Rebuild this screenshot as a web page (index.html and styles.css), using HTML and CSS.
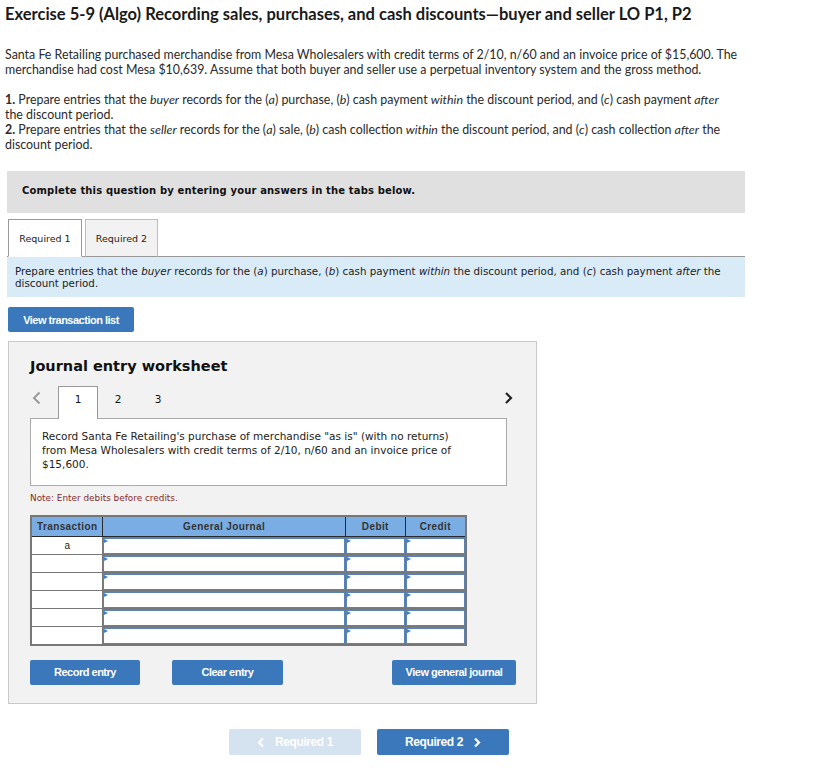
FILE: index.html
```html
<!DOCTYPE html>
<html>
<head>
<meta charset="utf-8">
<link rel="stylesheet" href="styles.css">
</head>
<body>
<div class="page">
  <h1 class="title">Exercise 5-9 (Algo) Recording sales, purchases, and cash discounts—buyer and seller LO P1, P2</h1>
  <p class="intro">Santa Fe Retailing purchased merchandise from Mesa Wholesalers with credit terms of 2/10, n/60 and an invoice price of $15,600. The merchandise had cost Mesa $10,639. Assume that both buyer and seller use a perpetual inventory system and the gross method.</p>
  <p class="reqs"><b>1.</b> Prepare entries that the <i>buyer</i> records for the (<i>a</i>) purchase, (<i>b</i>) cash payment <i>within</i> the discount period, and (<i>c</i>) cash payment <i>after</i> the discount period.<br><b>2.</b> Prepare entries that the <i>seller</i> records for the (<i>a</i>) sale, (<i>b</i>) cash collection <i>within</i> the discount period, and (<i>c</i>) cash collection <i>after</i> the discount period.</p>

  <div class="banner">Complete this question by entering your answers in the tabs below.</div>

  <div class="tabs">
    <div class="tab active">Required 1</div>
    <div class="tab">Required 2</div>
  </div>
  <div class="instr">Prepare entries that the <i>buyer</i> records for the (<i>a</i>) purchase, (<i>b</i>) cash payment <i>within</i> the discount period, and (<i>c</i>) cash payment <i>after</i> the discount period.</div>

  <button class="btn btn-list">View transaction list</button>

  <div class="panel">
    <h2 class="panel-title">Journal entry worksheet</h2>
    <div class="steps">
      <span class="arrow prev">
        <svg width="9" height="14" viewBox="0 0 9 14"><path d="M7.5 1.5 L2 7 L7.5 12.5" fill="none" stroke="#9a9a9a" stroke-width="2"/></svg>
      </span>
      <span class="step active">1</span>
      <span class="step">2</span>
      <span class="step">3</span>
      <span class="spacer"></span>
      <span class="arrow next">
        <svg width="9" height="14" viewBox="0 0 9 14"><path d="M2 2 L7 7 L2 12" fill="none" stroke="#222" stroke-width="2.2"/></svg>
      </span>
    </div>
    <div class="record">Record Santa Fe Retailing's purchase of merchandise "as is" (with no returns) from Mesa Wholesalers with credit terms of 2/10, n/60 and an invoice price of $15,600.</div>
    <div class="note">Note: Enter debits before credits.</div>

    <table class="journal">
      <thead>
        <tr><th class="c-tr">Transaction</th><th class="c-gj">General Journal</th><th class="c-dr">Debit</th><th class="c-cr">Credit</th></tr>
      </thead>
      <tbody>
        <tr><td class="tcell">a</td><td class="inp"><div class="box"></div></td><td class="inp"><div class="box"></div></td><td class="inp"><div class="box"></div></td></tr>
        <tr><td class="tcell"></td><td class="inp"><div class="box"></div></td><td class="inp"><div class="box"></div></td><td class="inp"><div class="box"></div></td></tr>
        <tr><td class="tcell"></td><td class="inp"><div class="box"></div></td><td class="inp"><div class="box"></div></td><td class="inp"><div class="box"></div></td></tr>
        <tr><td class="tcell"></td><td class="inp"><div class="box"></div></td><td class="inp"><div class="box"></div></td><td class="inp"><div class="box"></div></td></tr>
        <tr><td class="tcell"></td><td class="inp"><div class="box"></div></td><td class="inp"><div class="box"></div></td><td class="inp"><div class="box"></div></td></tr>
        <tr><td class="tcell"></td><td class="inp"><div class="box"></div></td><td class="inp"><div class="box"></div></td><td class="inp"><div class="box"></div></td></tr>
      </tbody>
    </table>

    <div class="actions">
      <button class="btn btn-record">Record entry</button>
      <button class="btn btn-clear">Clear entry</button>
      <span class="spacer"></span>
      <button class="btn btn-view">View general journal</button>
    </div>
  </div>

  <div class="bottom-nav">
    <button class="btn nav-btn disabled"><svg class="chev" width="8" height="11" viewBox="0 0 8 11"><path d="M6 1.5 L2 5.5 L6 9.5" fill="none" stroke="#fff" stroke-width="2.2"/></svg>Required 1</button>
    <button class="btn nav-btn">Required 2<svg class="chev" width="8" height="11" viewBox="0 0 8 11"><path d="M2 1.5 L6 5.5 L2 9.5" fill="none" stroke="#fff" stroke-width="2.2"/></svg></button>
  </div>
</div>
</body>
</html>
```

FILE: styles.css
```css
* { box-sizing: border-box; }
html, body { margin: 0; padding: 0; background: #fff; }
body { font-family: Lato, "Open Sans", sans-serif; color: #222; }
.page { width: 828px; padding: 0 0 20px 0; }

.title {
  margin: 5px 0 0 5px;
  font-size: 16.5px;
  line-height: 18px;
  font-weight: 700;
  color: #1a1a1a;
}
.intro, .reqs {
  margin: 0 0 0 5px;
  font-size: 12.4px;
  line-height: 15px;
  color: #2a2a2a;
}
.intro { margin-top: 24px; width: 752px; }
.reqs { margin-top: 15px; width: 724px; }

.banner {
  margin: 19px 0 0 7px;
  width: 738px;
  height: 42px;
  background: #e0e0e0;
  padding: 0 0 3px 15px;
  display: flex;
  align-items: center;
  font-family: "DejaVu Sans", Verdana, sans-serif;
  font-size: 10px;
  font-weight: 700;
  color: #111;
  letter-spacing: 0.15px;
}

.tabs {
  margin: 6px 0 0 7px;
  width: 738px;
  display: flex;
  gap: 3px;
  border-bottom: 1px solid #999;
}
.tab {
  height: 38px;
  margin-bottom: -1px;
  width: 73px;
  display: flex;
  align-items: center;
  justify-content: center;
  font-family: "DejaVu Sans", Verdana, sans-serif;
  font-size: 9.5px;
  color: #222;
  background: #f2f2f2;
  border: 1px solid #bdbdbd;
  border-bottom: 1px solid #999;
}
.tab.active {
  width: 74px;
  margin-left: 1px;
  background: #fff;
  border-color: #999;
  border-bottom-color: #fff;
}
.instr {
  margin-left: 7px;
  width: 738px;
  height: 40px;
  background: #daebf8;
  padding: 8px 4px 0 8px;
  font-family: "DejaVu Sans", Verdana, sans-serif;
  font-size: 10.3px;
  line-height: 12px;
  color: #222;
}

.btn {
  border: none;
  border-radius: 2px;
  background: #3a77bb;
  color: #fff;
  font-family: "Liberation Sans", Arial, sans-serif;
  font-weight: 700;
  font-size: 11px;
  letter-spacing: -0.5px;
  cursor: pointer;
  padding: 0;
}
.btn-list {
  display: block;
  margin: 10px 0 0 8px;
  width: 126px;
  height: 25px;
}

.panel {
  margin: 9px 0 0 8px;
  width: 529px;
  height: 363px;
  background: #f2f2f2;
  border: 1px solid #c9c9c9;
  padding: 15px 0 0 21px;
}
.panel-title {
  margin: 0;
  font-family: "DejaVu Sans", Verdana, sans-serif;
  font-size: 14.5px;
  line-height: 18px;
  font-weight: 700;
  color: #111;
}
.steps {
  margin-top: 11px;
  width: 483px;
  height: 32px;
  display: flex;
  align-items: stretch;
}
.arrow { display: flex; align-items: center; padding-bottom: 8px; }
.arrow.prev { width: 28px; padding-left: 2px; }
.step {
  width: 40px;
  display: flex;
  align-items: center;
  justify-content: center;
  padding-bottom: 9px;
  font-family: "DejaVu Sans", Verdana, sans-serif;
  font-size: 10.5px;
  color: #111;
  border: 1px solid transparent;
  border-bottom: none;
  height: 33px;
  position: relative;
  z-index: 1;
}
.step.active {
  background: #fff;
  border-color: #999;
}
.spacer { flex: 1; }

.record {
  width: 477px;
  height: 68px;
  background: #fff;
  border: 1px solid #aaa;
  padding: 10px 40px 0 11px;
  font-family: "DejaVu Sans", Verdana, sans-serif;
  font-size: 10.5px;
  line-height: 14px;
  color: #222;
}
.note {
  margin-top: 6px;
  font-family: "DejaVu Sans", Verdana, sans-serif;
  font-size: 8.9px;
  line-height: 12px;
  color: #8a2a2a;
}

.journal {
  margin-top: 11px;
  border-collapse: collapse;
  width: 437px;
  border: 2px solid #777;
}
.journal th {
  height: 20px;
  background: #79ade4;
  border: 1px solid #2a2a2a;
  border-top: none;
  font-family: "Liberation Sans", Arial, sans-serif;
  font-size: 10px;
  font-weight: 700;
  letter-spacing: 0.4px;
  color: #333;
  padding: 0;
  text-align: center;
}
.journal th:first-child { border-left: none; }
.journal th:last-child { border-right: none; }
.c-tr { width: 72px; }
.c-gj { width: 244px; }
.c-dr { width: 60px; }
.c-cr { width: 61px; }
.journal td {
  height: 18px;
  padding: 0;
  border: 1px solid #777;
  background: #fff;
}
.tcell {
  text-align: center;
  font-family: "Liberation Sans", Arial, sans-serif;
  font-size: 10px;
  color: #222;
  vertical-align: middle;
}
.box {
  position: relative;
  height: 17px;
  border: 1px solid #5b82b0;
  border-top-width: 2px;
  background: #fff;
}
.box::before {
  content: "";
  position: absolute;
  left: 0;
  top: 0;
  border-left: 4px solid #3c7fd0;
  border-top: 2.5px solid transparent;
  border-bottom: 2.5px solid transparent;
}

.actions {
  margin-top: 14px;
  width: 486px;
  display: flex;
  align-items: center;
}
.actions .btn { height: 25px; }
.btn-record { width: 110px; }
.btn-clear { width: 111px; margin-left: 32px; }
.btn-view { width: 124px; }

.bottom-nav {
  margin-top: 25px;
  width: 738px;
  display: flex;
  justify-content: center;
  gap: 16px;
}
.nav-btn {
  width: 132px;
  height: 26px;
  font-size: 12px;
  letter-spacing: -0.4px;
  display: flex;
  align-items: center;
  justify-content: center;
  gap: 10px;
}
.nav-btn.disabled { background: #d5e2f0; color: #fff; }
.chev { display: block; }
```
